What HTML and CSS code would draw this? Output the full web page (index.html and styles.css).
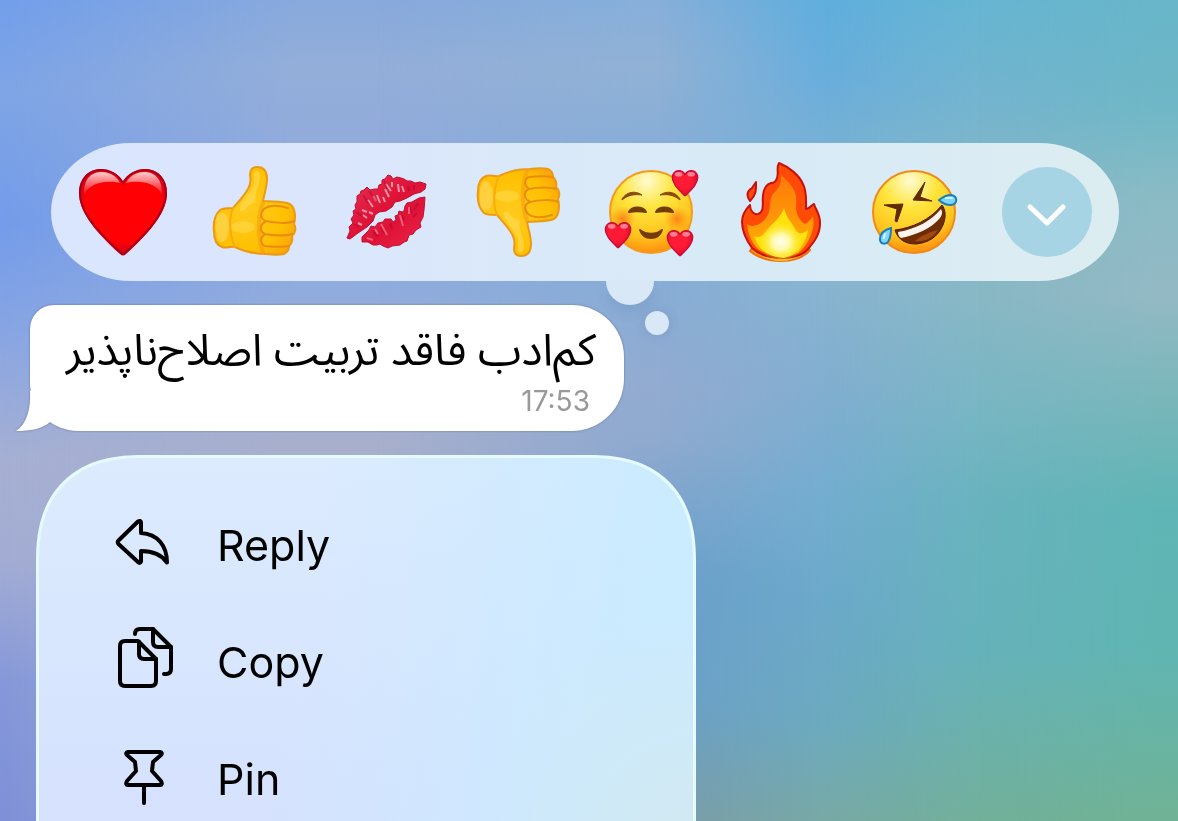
FILE: index.html
```
<!DOCTYPE html>
<html lang="en">
<head>
  <meta charset="utf-8">
  <meta name="viewport" content="width=device-width, initial-scale=1">
  <title>Message actions</title>
  <link rel="stylesheet" href="styles.css">
</head>
<body>
  <div class="wallpaper">
    <div class="shade shade-1"></div>
    <div class="shade shade-2"></div>
    <div class="shade shade-3"></div>
    <div class="shade shade-4"></div>
    <div class="shade shade-5"></div>
  </div>

  <!-- shapes shared by several emoji -->
  <svg class="defs" aria-hidden="true">
    <defs>
      <linearGradient id="heartShine" x1="0" y1="0" x2="0" y2="1">
        <stop offset="0" stop-color="#fff" stop-opacity=".8"/>
        <stop offset="1" stop-color="#fff" stop-opacity="0"/>
      </linearGradient>
      <radialGradient id="heartFill" cx=".5" cy=".42" r=".6">
        <stop offset=".7" stop-color="#ff0004"/>
        <stop offset="1" stop-color="#c4001c"/>
      </radialGradient>
      <radialGradient id="smallHeartFill" cx=".45" cy=".4" r=".6">
        <stop offset=".5" stop-color="#ff1a36"/>
        <stop offset="1" stop-color="#dc0a2c"/>
      </radialGradient>
      <radialGradient id="faceFill" cx=".45" cy=".12" r=".95">
        <stop offset="0" stop-color="#fffbd0"/>
        <stop offset=".35" stop-color="#ffe53c"/>
        <stop offset=".72" stop-color="#ffc21c"/>
        <stop offset="1" stop-color="#ff7d0a"/>
      </radialGradient>
      <radialGradient id="blush">
        <stop offset="0" stop-color="#ff6a10" stop-opacity=".75"/>
        <stop offset="1" stop-color="#ff8a10" stop-opacity="0"/>
      </radialGradient>
      <radialGradient id="handFill" cx=".4" cy=".45" r=".7">
        <stop offset="0" stop-color="#ffcb1e"/>
        <stop offset=".7" stop-color="#ffc002"/>
        <stop offset="1" stop-color="#fba40c"/>
      </radialGradient>
      <radialGradient id="fireGlow">
        <stop offset="0" stop-color="#fffef0"/>
        <stop offset=".4" stop-color="#fff9a8"/>
        <stop offset="1" stop-color="#ffe820" stop-opacity="0"/>
      </radialGradient>
      <linearGradient id="flame" x1="0" y1="0" x2="0" y2="1">
        <stop offset="0" stop-color="#ff7a0a"/>
        <stop offset=".6" stop-color="#ff9a08"/>
        <stop offset="1" stop-color="#ffb400"/>
      </linearGradient>
      <linearGradient id="lips" x1="0" y1="0" x2="1" y2="1">
        <stop offset="0" stop-color="#e8365a"/>
        <stop offset=".5" stop-color="#dd1236"/>
        <stop offset="1" stop-color="#f0244a"/>
      </linearGradient>
      <g id="heart">
        <path d="M45 15C50 6 59 2 67 2C80 2 89 12 89 26C89 43 76 62 48 87Q45 90 42 87C14 62 1 43 1 26C1 12 10 2 23 2C31 2 40 6 45 15Z" fill="url(#heartFill)"/>
        <path d="M45 16C50 7 59 3 67 3C79 3 88 12 88 26C88 43 75 61 47 86Q45 88 43 86C15 61 2 43 2 26C2 12 11 3 23 3C31 3 40 7 45 16Z" fill="none" stroke="#a80018" stroke-width="2"/>
        <path d="M6 29C5 10 15 5 24 5C33 5 39 10 42 16C30 13 10 15 6 29Z" fill="url(#heartShine)"/>
        <path d="M84 29C85 10 75 5 66 5C57 5 51 10 48 16C60 13 80 15 84 29Z" fill="url(#heartShine)"/>
      </g>
      <g id="smallHeart">
        <path d="M45 15C50 6 59 2 67 2C80 2 89 12 89 26C89 43 76 62 48 87Q45 90 42 87C14 62 1 43 1 26C1 12 10 2 23 2C31 2 40 6 45 15Z" fill="url(#smallHeartFill)" stroke="#c40a3c" stroke-width="4"/>
        <ellipse cx="23" cy="15" rx="13" ry="8" fill="#ff9aa8" opacity=".8"/>
        <ellipse cx="66" cy="15" rx="13" ry="8" fill="#ff9aa8" opacity=".8"/>
      </g>
      <g id="hand" stroke-linecap="round" stroke-linejoin="round">
        <path d="M47 0C42 0 40 3 40 8C41 13 41 17 38 22C34 29 29 34 23 41C17 41 13 41 10 43C4 49 3 57 4 65C4 73 6 78 12 80C16 82 20 79 25 80C33 84 41 87 56 87C64 88 70 88 74 87C78 85 79 82 79 79C82 76 83 73 82 69C86 66 86 60 84 57C86 50 85 40 80 37C72 34 63 35 53 34C54 28 57 20 57 12C57 5 54 0 47 0Z" fill="url(#handFill)" stroke="#ea9a14" stroke-width="2"/>
        <path d="M7 48C13 42 18 48 19 58C19 68 16 76 10 75C5 72 5 54 7 48Z" fill="#ffd964" opacity=".6"/>
        <path d="M44 5C47 2 51 5 50 12C49 20 44 25 46 36C38 35 34 47 30 44C29 35 42 25 44 17Z" fill="#ffdf62" opacity=".5"/>
        <ellipse cx="33" cy="60" rx="12" ry="6" fill="#ffdd54" opacity=".5"/>
        <path d="M23 41C19 50 19 68 25 80" fill="none" stroke="#f5ad10" stroke-width="2"/>
        <path d="M53 36C48 46 47 70 53 85" fill="none" stroke="#f59c10" stroke-width="4" opacity=".6"/>
        <path d="M78 41C68 38 59 38 54 42C50 46 50 52 56 54C64 56 78 57 84 54M55 55C49 58 50 65 55 67C64 69 76 69 82 67M54 68C50 71 50 77 55 79C63 80 73 80 79 79" fill="none" stroke="#e88e0a" stroke-width="2"/>
      </g>
    </defs>
  </svg>

  <main class="chat">
    <div class="reactions">
      <button class="reaction" type="button" aria-label="Love">
        <svg viewBox="0 0 90 90"><use href="#heart"/></svg>
      </button>
      <button class="reaction" type="button" aria-label="Like">
        <svg viewBox="0 0 90 90"><use href="#hand"/></svg>
      </button>
      <button class="reaction" type="button" aria-label="Kiss">
        <svg viewBox="0 0 90 90">
          <path d="M5 71L8 64L7 60L11 56L9 52L12 48L11 44L14 42L13 38L15 35L15 29L18 27L19 24L22 23L25 20L28 23L33 22L36 22L37 18L40 17L40 13L43 12L46 8L49 9L51 12L55 10L59 11L62 12L65 14L69 14L73 16L78 15L84 17L83 22L79 25L72 27L65 31L58 34L53 35L50 40L44 44L37 45L33 48L31 54L25 60L16 66L8 72Z" fill="url(#lips)" stroke="#c70c30" stroke-width="1"/>
          <path d="M83 30L77 31L70 35L65 36L63 39L62 44L60 45L57 44L56 48L53 49L54 53L51 55L49 52L43 52L41 55L36 56L33 60L29 59L27 63L23 67L20 70L20 75L26 75L31 78L35 78L38 77L41 79L46 81L50 79L58 78L62 75L65 74L67 68L71 67L74 63L79 60L78 56L81 50L82 43Z" fill="url(#lips)" stroke="#c70c30" stroke-width="1"/>
          <path d="M44 17L49 24M50 15L50 20M43 22L47 30M31 29L34 34M26 33L31 40M20 43L25 45M21 48L25 51M35 28L38 36M56 17L57 25M60 19L62 25M16 56L20 58M27 45L31 47M41 30L43 35" stroke="#ffd6d8" stroke-width="2" opacity=".65"/>
          <path d="M21 28L27 37M27 24L34 34M42 14L45 22M66 19L67 24M72 18L72 23M14 45L20 49M12 57L17 60M76 36L72 43M68 40L70 46M60 48L62 53M48 56L50 62M39 60L43 67M31 64L36 70M75 46L71 50" stroke="#a80026" stroke-width="2" opacity=".4"/>
          <path d="M39 57L45 68M33 62L36 67M58 48L61 59M67 40L67 47M25 71L31 73" stroke="#ff8d9f" stroke-width="2" opacity=".6"/>
        </svg>
      </button>
      <button class="reaction" type="button" aria-label="Dislike">
        <svg viewBox="0 0 90 90"><use href="#hand" transform="matrix(1 0 0 -1 0 89)"/></svg>
      </button>
      <button class="reaction" type="button" aria-label="Adore">
        <svg viewBox="0 0 90 90">
          <circle cx="45" cy="45" r="41" fill="url(#faceFill)" stroke="#f59a1a" stroke-width="2"/>
          <circle cx="17" cy="52" r="13" fill="url(#blush)"/>
          <circle cx="71" cy="52" r="13" fill="url(#blush)"/>
          <path d="M16 32C20 25 29 23 36 28C28 27 22 28 16 33ZM74 32C70 25 61 23 54 28C62 27 68 28 74 33Z" fill="#8a4a0c" stroke="#8a4a0c" stroke-width="1"/>
          <path d="M23 45C26 39 37 39 40 45C35 44 28 44 23 45ZM50 45C53 39 64 39 67 45C62 44 55 44 50 45Z" fill="#743c08" stroke="#743c08" stroke-width="2" stroke-linejoin="round"/>
          <path d="M34 63C40 68 50 68 56 63C54 69 51 71 45 71C39 71 36 69 34 63Z" fill="#743c08" stroke="#743c08" stroke-width="2" stroke-linejoin="round"/>
          <use href="#smallHeart" transform="translate(66 3) scale(.29)"/>
          <use href="#smallHeart" transform="translate(-1 55) scale(.29)"/>
          <use href="#smallHeart" transform="translate(61 63) scale(.29)"/>
        </svg>
      </button>
      <button class="reaction" type="button" aria-label="Fire">
        <svg viewBox="0 0 90 90">
          <path d="M12 84C19 90 30 94 43 94C55 94 66 90 72 83L66 78H16Z" fill="#ff9a10" stroke="#f0700c" stroke-width="2"/>
          <path d="M41 -4C51 0 61 8 65 17C69 25 68 33 68 42C72 42 73 38 76 37C77 42 82 46 82 56C82 67 77 74 70 82C60 94 28 94 14 81C9 74 4 66 4 55C4 48 8 42 12 38C12 44 16 48 20 47C27 45 24 36 25 28C26 21 29 17 33 16C36 16 38 15 39 11C41 6 38 1 41 -4Z" fill="#ff4a08" stroke="#c81010" stroke-width="2" stroke-linejoin="round"/>
          <path d="M43 8C52 16 60 24 58 37C57 46 62 55 67 57C71 55 74 51 75 49C78 64 69 79 60 86C46 92 29 88 20 82C12 74 10 65 9 57C13 61 22 59 28 51C34 44 30 34 35 27C40 22 44 17 43 8Z" fill="url(#flame)"/>
          <path d="M46 41C49 53 55 56 58 64C62 68 66 66 70 63C68 76 60 88 46 91C30 90 20 82 16 69C22 72 26 68 30 62C36 54 42 52 46 41Z" fill="#ffe20c"/>
          <ellipse cx="43" cy="75" rx="22" ry="20" fill="url(#fireGlow)"/>
          <path d="M23 89Q43 96 63 89L55 92Q43 96 31 92Z" fill="#ffc928"/>
          <path d="M18 15C18 22 19 27 12 34C8 28 9 24 14 21Z" fill="#ff4a08" stroke="#c81010" stroke-width="2" stroke-linejoin="round"/>
        </svg>
      </button>
      <button class="reaction" type="button" aria-label="Laugh">
        <svg viewBox="0 0 90 90">
          <circle cx="44" cy="45" r="41" fill="url(#faceFill)" stroke="#f08a18" stroke-width="2"/>
          <path d="M14 38L33 37C31 44 29 49 27 55L25 54L27 42Z" fill="#5f2a04" stroke="#5f2a04" stroke-width="1" stroke-linejoin="round"/>
          <path d="M55 15L43 33L62 34L50 30Z" fill="#5f2a04" stroke="#5f2a04" stroke-width="1" stroke-linejoin="round"/>
          <path d="M25 63C42 61 60 53 72 38C76 43 76 51 73 58C68 70 58 76 46 77C36 77 28 73 25 63Z" fill="#6f2c04" stroke="#4d1d02" stroke-width="1"/>
          <path d="M45 74C50 69 60 65 68 63C62 72 54 75 45 74Z" fill="#a04a10"/>
          <path d="M28 65C46 62 61 54 71 42C73 45 72 48 70 51C62 61 46 68 31 71Q28 69 28 65Z" fill="#fbf3ee"/>
          <path d="M69 33C74 29 78 28 81 28C88 29 88 37 81 38C77 38 73 37 69 33Z" fill="#7fd6fa" stroke="#187fb8" stroke-width="2"/>
          <path d="M21 61C14 63 10 67 10 72C10 78 17 78 19 73C21 69 21 65 21 61Z" fill="#7fd6fa" stroke="#187fb8" stroke-width="2"/>
          <path d="M76 31H82M15 67L14 71" stroke="#d6f5ff" stroke-width="2" stroke-linecap="round"/>
        </svg>
      </button>
      <button class="reaction more" type="button" aria-label="More reactions">
        <svg viewBox="0 0 90 90">
          <path d="M28 40L45 56L61 40" fill="none" stroke="#fff" stroke-width="5" stroke-linecap="round" stroke-linejoin="round"/>
        </svg>
      </button>
      <span class="dot dot-big"></span>
      <span class="dot dot-small"></span>
    </div>

    <div class="bubble">
      <p class="text" dir="rtl" lang="fa">کم‌ادب فاقد تربیت اصلاح‌ناپذیر</p>
      <time class="time">17:53</time>
      <svg class="tail" viewBox="0 0 48 40" aria-hidden="true">
        <path d="M14 0C15 17 11 33 0 40C14 40 26 38 34 31L40 0Z" fill="#fff"/>
      </svg>
    </div>

    <div class="menu">
      <button class="item" type="button">
        <svg class="icon" viewBox="0 0 60 60">
          <path d="M26 7.5V18C43 19 52 31 52 47.500C46 39 38 36 26 36V46.500Q25 49 23 47L3.500 29Q2 27 3.500 25.500L23 6.500Q25.500 5 26 7.500Z"/>
        </svg>
        Reply
      </button>
      <button class="item" type="button">
        <svg class="icon" viewBox="0 0 60 60">
          <path d="M10 9H23L41 27V49Q41 54 36 54H10Q5 54 5 49V14Q5 9 10 9Z"/>
          <path d="M24 10V22Q24 27 29 27H41"/>
          <path d="M20 2Q20 -3 25 -3H38L56 15V37Q56 42 51 42H49"/>
          <path d="M38 -3V10Q38 15 43 15H56"/>
        </svg>
        Copy
      </button>
      <button class="item" type="button">
        <svg class="icon" viewBox="0 0 60 60">
          <path d="M13 3H45Q48 4 46 6L38 13L37 22L46 32Q48 36 45 36H13Q10 36 12 32L21 22L20 13L12 6Q10 4 13 3Z"/>
          <path d="M29 36V54"/>
        </svg>
        Pin
      </button>
    </div>
  </main>
</body>
</html>
```
FILE: styles.css
```
* {
  box-sizing: border-box;
}

body {
  margin: 0;
  font-family: Inter, "Liberation Sans", sans-serif;
  color: #000;
  overflow: hidden;
}

button {
  border: none;
  padding: 0;
  background: none;
  font: inherit;
  color: inherit;
  cursor: pointer;
}

svg {
  display: block;
  overflow: visible;
}

.defs {
  position: absolute;
  width: 0;
  height: 0;
}

/* wallpaper: vertical gradients that fade into each other from left to right */
.wallpaper {
  position: fixed;
  inset: 0;
  z-index: -1;
  background: linear-gradient(#729feb 0%, #7fa5e6 11%, #739cea 27%, #87a5e4 40%, #a6b0d3 56%, #a3add4 68%, #8698da 83%, #7e90d8 100%);
}

.shade {
  position: absolute;
  inset: 0;
}

.shade-1 {
  background: linear-gradient(#87a9dc 0%, #93aed9 8%, #92abdb 17%, #90abdd 35%, #a8afcd 54%);
  mask-image: linear-gradient(to right, transparent 0%, #000 25%);
}

.shade-2 {
  background: linear-gradient(#86afda 0%, #91b1d5 8%, #88aed7 17%, #88add6 35%, #93abd1 47%, #8fa9cf 54%, #6b9fcb 70%, #6c9fc8 85%, #7a9caa 100%);
  mask-image: linear-gradient(to right, transparent 32%, #000 54%);
}

.shade-3 {
  background: linear-gradient(#5faedd 0%, #6aaedc 10%, #79b1d3 19%, #88b4d0 35%, #82aed0 47%, #74add0 60%, #6ca9ca 73%, #6caabf 88%, #78a9a5 100%);
  mask-image: linear-gradient(to right, transparent 56%, #000 70%);
}

.shade-4 {
  background: linear-gradient(#66b5d2 0%, #74b4cf 12%, #84b7c6 24%, #88b8c5 36%, #79b6c4 49%, #69b3be 61%, #66b2bb 79%, #72b09a 100%);
  mask-image: linear-gradient(to right, transparent 70%, #000 83%);
}

.shade-5 {
  background: linear-gradient(#68b5c9 0%, #6fb7c6 13%, #8abbc5 24%, #93b9c4 36%, #72b6b8 52%, #5fb5b5 62%, #60b5b2 79%, #70b295 100%);
  mask-image: linear-gradient(to right, transparent 83%, #000 98%);
}

.chat {
  display: flex;
  flex-direction: column;
  align-items: flex-start;
  gap: 24px;
  height: 100vh;
  padding-top: 143px;
}

/* reactions */
.reactions {
  position: relative;
  align-self: stretch;
  display: flex;
  justify-content: space-between;
  margin: 0 59px 0 51px;
  padding: 24px 27px;
  border-radius: 80px / 69px;
  background: linear-gradient(to right, #dae6fe, #dbe6fd 25%, #dae9f9 45%, #d8eaf6 70%, #dcedf1);
}

.reaction {
  width: 90px;
  height: 90px;
}

.more {
  border-radius: 50%;
  background: #a6d4e4;
}

.dot {
  position: absolute;
  background: #d9e8f7;
}

.dot-big {
  top: 100%;
  left: 555px;
  width: 48px;
  height: 24px;
  border-radius: 0 0 24px 24px;
  box-shadow: 0 8px 12px rgba(60, 90, 140, 0.12);
}

.dot-small {
  top: 168px;
  left: 594px;
  width: 24px;
  height: 24px;
  border-radius: 50%;
  box-shadow: 0 0 12px rgba(60, 90, 140, 0.2);
}

/* message */
.bubble {
  position: relative;
  display: flex;
  flex-direction: column;
  gap: 2px;
  margin-left: 30px;
  padding: 16px 28px 12px 36px;
  border-radius: 24px 52px 52px 48px;
  background: #fff;
  filter: drop-shadow(0 0 1px rgba(50, 70, 110, 0.5));
}

.text {
  margin: 0;
  font-family: "Noto Sans Arabic", "DejaVu Sans", sans-serif;
  font-size: 44px;
  line-height: 60px;
  white-space: nowrap;
}

.time {
  align-self: flex-end;
  margin-right: 6px;
  font-size: 28px;
  line-height: 36px;
  color: #999;
}

.tail {
  position: absolute;
  left: -14px;
  bottom: 0;
  width: 48px;
  height: 40px;
}

/* context menu */
.menu {
  flex: 1;
  width: 660px;
  margin-left: 36px;
  padding-top: 28px;
  border: 3px solid #e6fbff;
  border-bottom: none;
  border-radius: 92px 92px 0 0;
  background:
    radial-gradient(circle at 100% 100%, #d2e9f2, rgba(210, 233, 242, 0) 30%),
    linear-gradient(100deg, rgba(203, 235, 255, 0) 40%, #cbebff 88%),
    linear-gradient(#dcebfe, #d5e1fe);
}

@supports (corner-shape: squircle) {
  .menu {
    border-radius: 106px 106px 0 0;
    corner-shape: superellipse(1.25);
  }
}

.item {
  display: flex;
  align-items: center;
  gap: 42px;
  width: 100%;
  height: 117px;
  padding-left: 76px;
  font-size: 43px;
  text-align: left;
}

.icon {
  width: 60px;
  height: 60px;
  fill: none;
  stroke: #000;
  stroke-width: 4;
  stroke-linecap: round;
  stroke-linejoin: round;
}
```
